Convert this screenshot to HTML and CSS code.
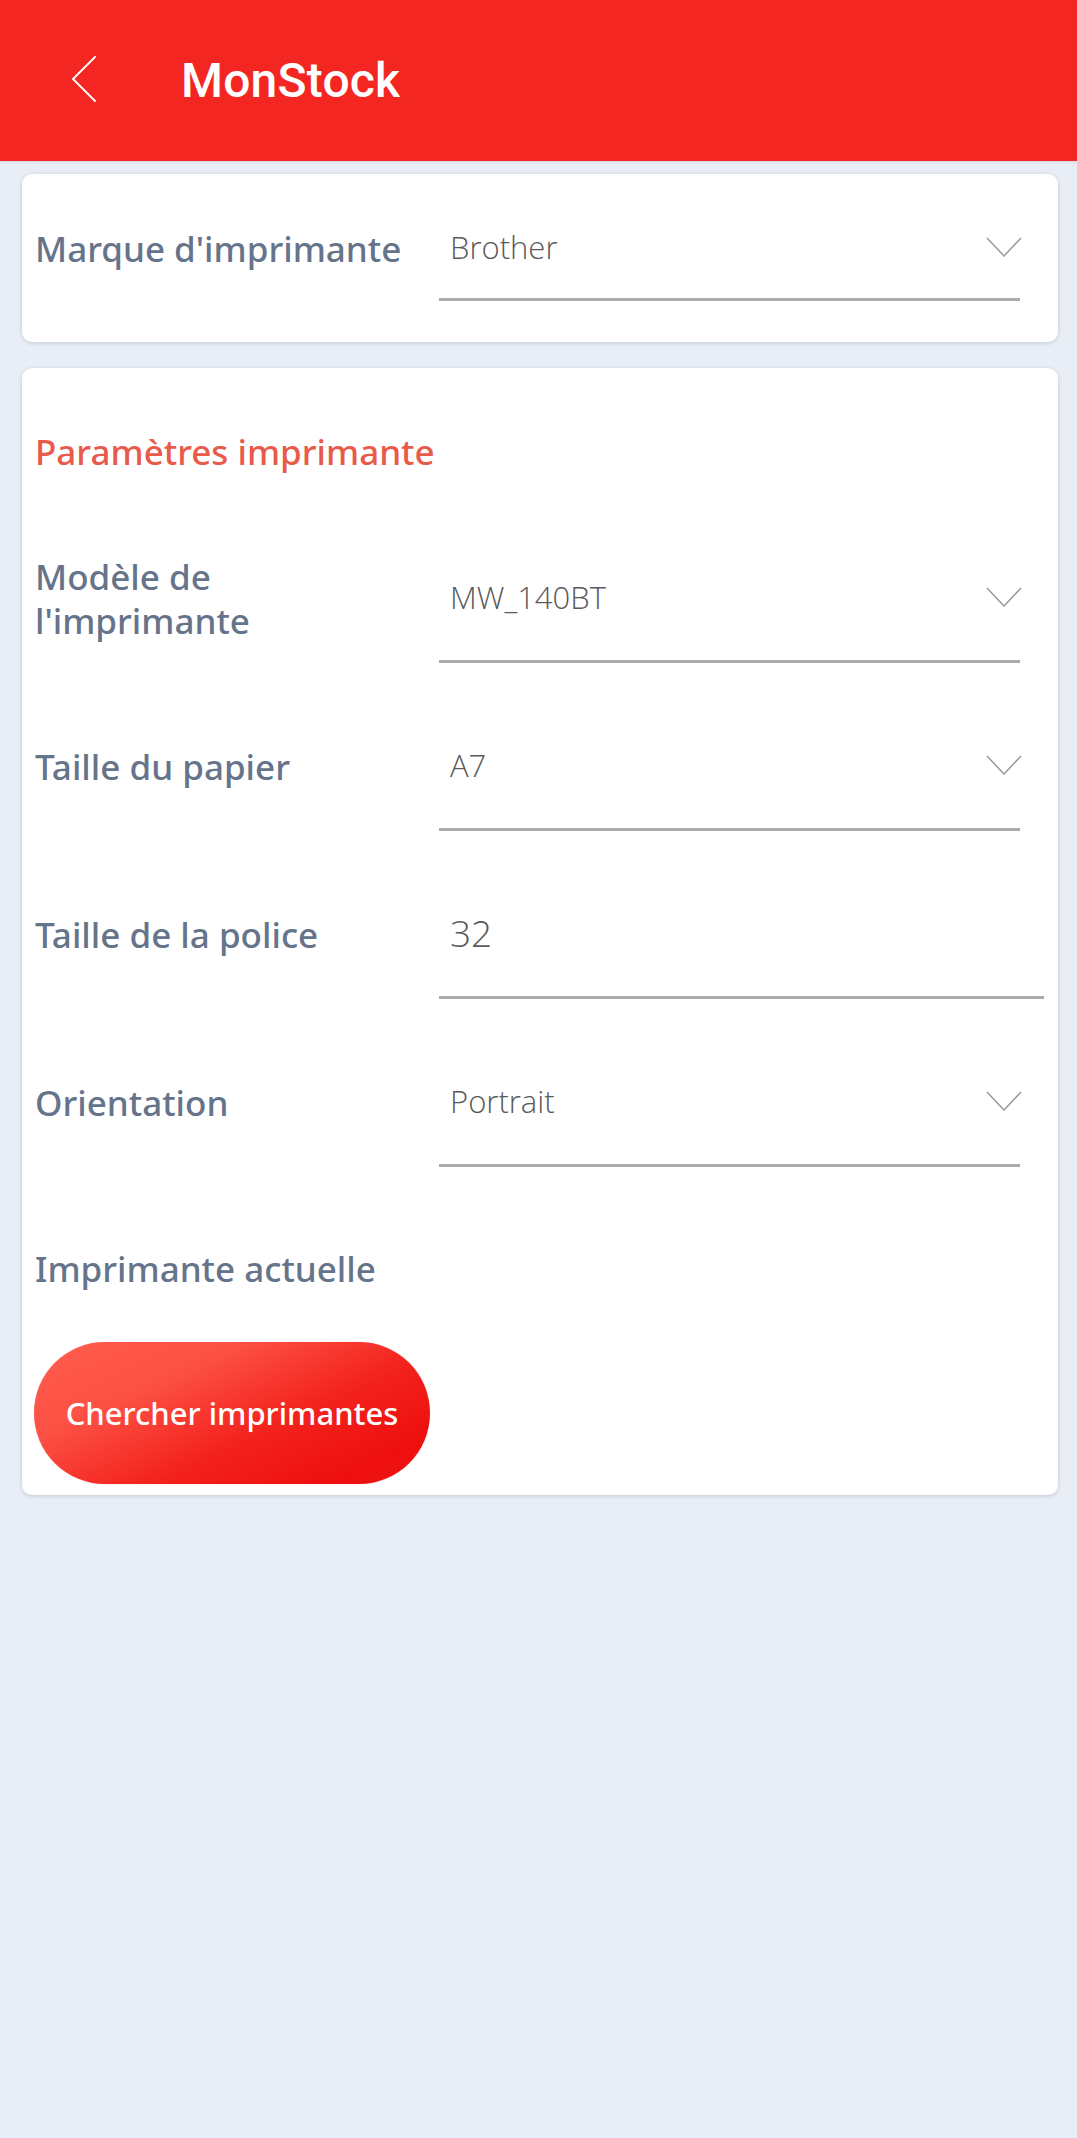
FILE: index.html
```html
<!DOCTYPE html>
<html lang="fr">
<head>
<meta charset="utf-8">
<title>MonStock</title>
<link rel="stylesheet" href="styles.css">
</head>
<body>
<header class="appbar">
  <svg class="back" viewBox="0 0 26 46" width="26" height="46" aria-hidden="true">
    <polyline points="24,1 2,23 24,45" fill="none" stroke="#ffffff" stroke-width="1.8" stroke-linecap="round" stroke-linejoin="round"/>
  </svg>
  <h1 class="title">MonStock</h1>
</header>

<main class="content">
  <section class="card card-brand">
    <div class="row">
      <div class="label">Marque d'imprimante</div>
      <div class="field field-short">
        <span class="value">Brother</span>
        <svg class="chev" viewBox="0 0 36 20" width="36" height="20" aria-hidden="true">
          <polyline points="1,1 18,19 35,1" fill="none" stroke="#9b9b9b" stroke-width="1.5"/>
        </svg>
      </div>
    </div>
  </section>

  <section class="card card-params">
    <h2 class="section-title">Paramètres imprimante</h2>

    <div class="row">
      <div class="label label-two"><span class="line">Modèle de</span><span class="line">l'imprimante</span></div>
      <div class="field">
        <span class="value">MW_140BT</span>
        <svg class="chev" viewBox="0 0 36 20" width="36" height="20" aria-hidden="true">
          <polyline points="1,1 18,19 35,1" fill="none" stroke="#9b9b9b" stroke-width="1.5"/>
        </svg>
      </div>
    </div>

    <div class="row">
      <div class="label">Taille du papier</div>
      <div class="field">
        <span class="value">A7</span>
        <svg class="chev" viewBox="0 0 36 20" width="36" height="20" aria-hidden="true">
          <polyline points="1,1 18,19 35,1" fill="none" stroke="#9b9b9b" stroke-width="1.5"/>
        </svg>
      </div>
    </div>

    <div class="row">
      <div class="label">Taille de la police</div>
      <div class="field field-input">
        <span class="value value-big">32</span>
      </div>
    </div>

    <div class="row">
      <div class="label">Orientation</div>
      <div class="field">
        <span class="value">Portrait</span>
        <svg class="chev" viewBox="0 0 36 20" width="36" height="20" aria-hidden="true">
          <polyline points="1,1 18,19 35,1" fill="none" stroke="#9b9b9b" stroke-width="1.5"/>
        </svg>
      </div>
    </div>

    <div class="label current">Imprimante actuelle</div>

    <button class="search-btn" type="button">Chercher imprimantes</button>
  </section>
</main>
</body>
</html>
```

FILE: styles.css
```css
html, body {
  margin: 0;
  padding: 0;
}

body {
  min-height: 100vh;
  background: #e9eef6;
  font-family: "Open Sans", "Noto Sans", sans-serif;
}

.appbar {
  height: 161px;
  background: #f42622;
  display: flex;
  align-items: center;
  padding-left: 71px;
  box-sizing: border-box;
  box-shadow: 0 1px 3px rgba(0, 0, 0, 0.12);
}

.back {
  display: block;
  flex: none;
  margin-top: -3px;
}

.title {
  margin: 0 0 0 84px;
  color: #ffffff;
  font-family: Roboto, "Liberation Sans", sans-serif;
  font-weight: 500;
  font-size: 48px;
  line-height: 1;
  letter-spacing: 0.2px;
}

.content {
  padding: 13px 19px 0 22px;
  display: flex;
  flex-direction: column;
  gap: 26px;
}

.card {
  background: #ffffff;
  border-radius: 10px;
  box-shadow: 0 1px 4px rgba(60, 70, 90, 0.22);
  box-sizing: border-box;
}

.card-brand {
  padding: 22px 38px 41px 11px;
}

.card-params {
  padding: 62px 38px 11px 11px;
}

.section-title {
  margin: 0 0 61px 2px;
  color: #e95a4b;
  font-family: "Noto Sans", "Open Sans", sans-serif;
  font-size: 35px;
  font-weight: 500;
  line-height: 43px;
}

.row {
  display: flex;
  align-items: center;
}

.card-params .row + .row {
  margin-top: 39px;
}

.label {
  width: 406px;
  flex: none;
  padding-left: 2px;
  box-sizing: border-box;
  color: #65748a;
  font-family: "Noto Sans", "Open Sans", sans-serif;
  font-size: 35px;
  font-weight: 500;
  line-height: 42px;
}

.label-two {
  display: flex;
  flex-direction: column;
}

.line {
  display: block;
  line-height: 44px;
}

.field {
  flex: 1;
  height: 129px;
  box-sizing: border-box;
  border-bottom: 3px solid #ababab;
  display: flex;
  align-items: center;
  justify-content: space-between;
  padding-left: 11px;
}

.field-short {
  height: 105px;
}

.field-input {
  margin-right: -24px;
}

.value {
  color: #5a5a5a;
  font-size: 31px;
  font-weight: 300;
  line-height: 40px;
}

.value-big {
  font-size: 37px;
}

.chev {
  display: block;
  flex: none;
  margin-right: -2px;
}

.current {
  width: auto;
  margin-top: 80px;
  line-height: 43px;
}

.search-btn {
  display: block;
  margin: 52px 0 0 1px;
  width: 396px;
  height: 142px;
  border: none;
  border-radius: 71px;
  background: linear-gradient(155deg, #ff5d4e 0%, #fc5044 30%, #f3221c 60%, #ee0f0f 85%, #ef1212 100%);
  color: #ffffff;
  font-family: "Noto Sans", "Open Sans", sans-serif;
  font-size: 31px;
  font-weight: 500;
  padding: 0;
  box-shadow: 0 0 1px rgba(200, 0, 0, 0.4);
}
```
